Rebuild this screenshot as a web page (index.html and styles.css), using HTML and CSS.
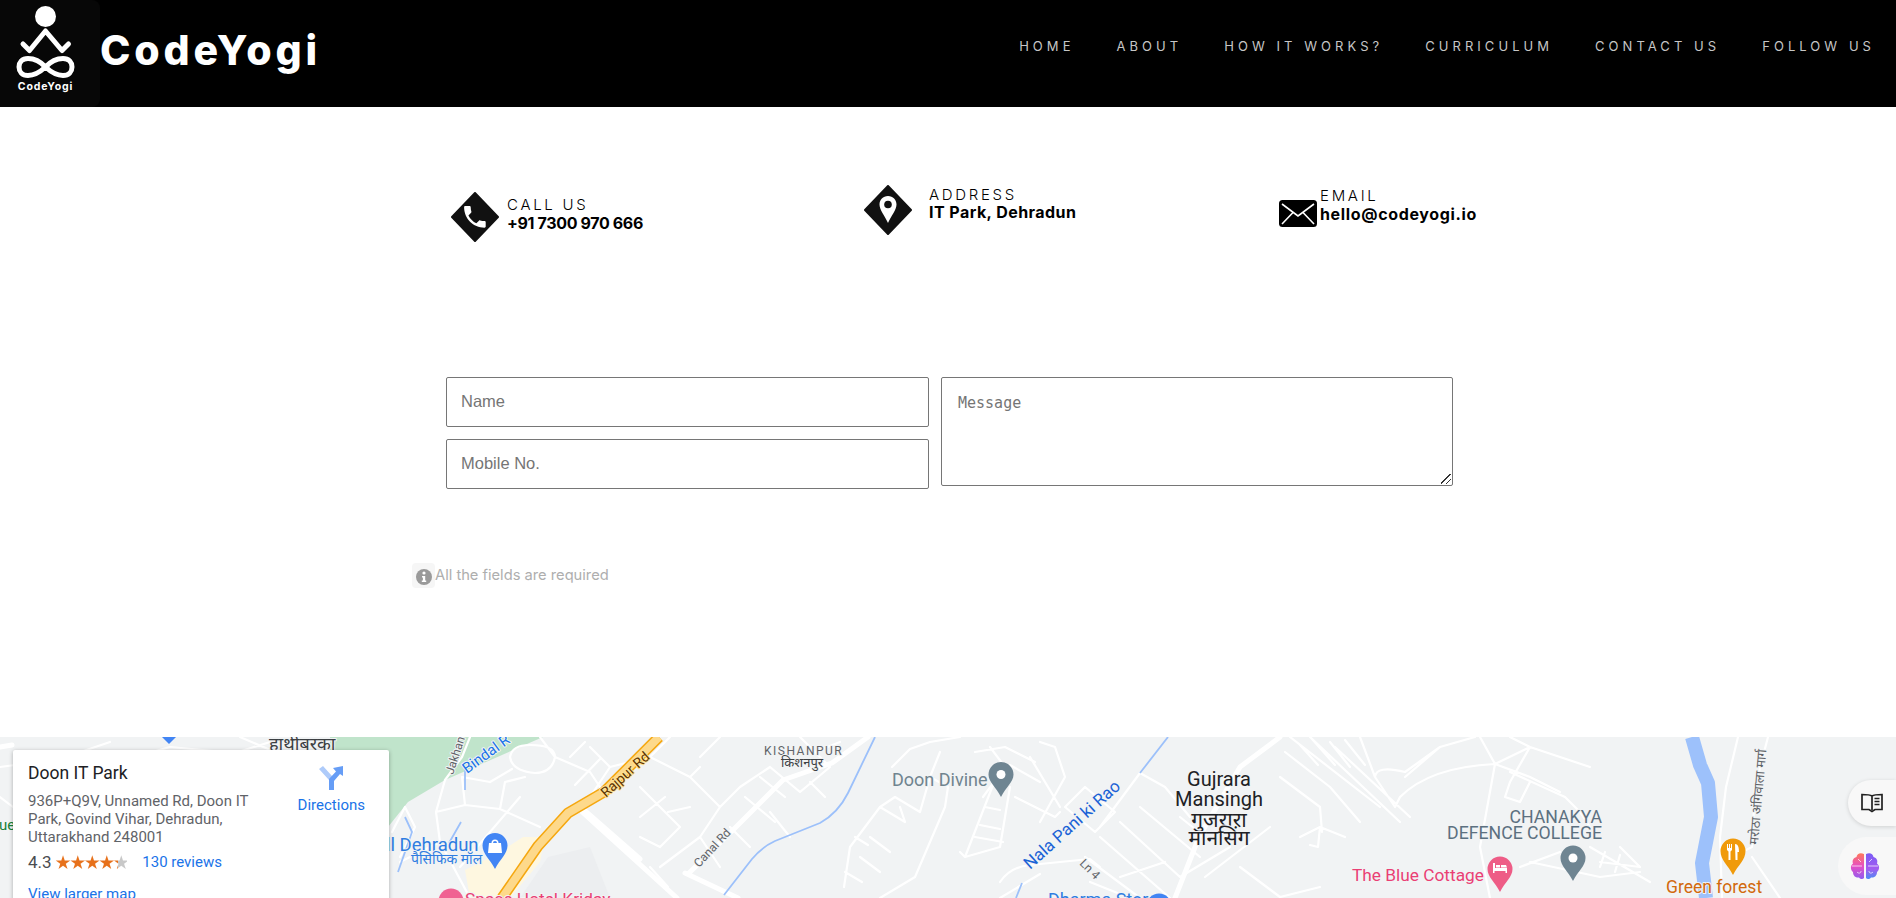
FILE: index.html
```html
<!DOCTYPE html>
<html lang="en">
<head>
<meta charset="utf-8">
<title>CodeYogi - Contact</title>
<link rel="stylesheet" href="styles.css">
</head>
<body>
<header class="topbar">
  <a class="brand" href="#">
    <span class="logo-box">
      <svg class="logo-svg" viewBox="0 0 100 106">
        <circle cx="45.500" cy="16.500" r="10.500" fill="#fff"/>
        <path class="logo-line" d="M23 44 L29.500 50.500 L45.500 31 L62 50.500 L68.500 44"/>
        <path class="logo-line" d="M45.500 67 C39 60 33 58.500 28 58.500 C22 58.500 19 62.500 19 67 C19 71.500 22 75.500 28 75.500 C33 75.500 39 73 45.500 67 C52 60 57 58.500 63 58.500 C69 58.500 72 62.500 72 67 C72 71.500 69 75.500 63 75.500 C57 75.500 52 73 45.500 67 Z"/>
        <text x="45.500" y="90" class="logo-text">CodeYogi</text>
      </svg>
    </span>
    <span class="wordmark">CodeYogi</span>
  </a>
  <nav class="nav">
    <a href="#">HOME</a>
    <a href="#">ABOUT</a>
    <a href="#">HOW IT WORKS?</a>
    <a href="#">CURRICULUM</a>
    <a href="#">CONTACT US</a>
    <a href="#">FOLLOW US</a>
  </nav>
</header>

<main class="contact">
  <section class="info-row">
    <div class="info info-call">
      <svg class="diamond" viewBox="0 0 48 50">
        <polygon points="24,1 47,25 24,49 1,25" fill="#111" stroke="#111" stroke-width="2" stroke-linejoin="round"/>
        <path transform="translate(9.500 10.500) scale(1.2)" fill="#fff" d="M6.620 10.790c1.440 2.830 3.760 5.140 6.590 6.590l2.200-2.200c.270-.270.670-.360 1.020-.240 1.120.370 2.330.570 3.570.570.550 0 1 .450 1 1V20c0 .550-.450 1-1 1-9.390 0-17-7.610-17-17 0-.550.450-1 1-1h3.500c.550 0 1 .450 1 1 0 1.250.200 2.450.570 3.570.110.350.030.740-.250 1.020l-2.200 2.200z"/>
      </svg>
      <div class="info-text">
        <span class="info-label">CALL US</span>
        <span class="info-value value-call">+91 7300 970 666</span>
      </div>
    </div>
    <div class="info info-address">
      <svg class="diamond" viewBox="0 0 48 50">
        <polygon points="24,1 47,25 24,49 1,25" fill="#111" stroke="#111" stroke-width="2" stroke-linejoin="round"/>
        <path fill="#fff" d="M24 11 C19 11 15.500 15 15.500 19.500 C15.500 25 21 31 24 38 C27 31 32.500 25 32.500 19.500 C32.500 15 29 11 24 11 Z"/>
        <circle cx="24" cy="19.500" r="3.800" fill="#111"/>
      </svg>
      <div class="info-text text-address">
        <span class="info-label">ADDRESS</span>
        <span class="info-value value-address">IT Park, Dehradun</span>
      </div>
    </div>
    <div class="info info-email">
      <svg class="envelope" viewBox="0 0 38 27">
        <rect width="38" height="27" rx="3.500" fill="#000"/>
        <path d="M3 4 L19 16 L35 4 M3 24 L14 12.500 M35 24 L24 12.500" stroke="#fff" stroke-width="1.600" fill="none"/>
      </svg>
      <div class="info-text">
        <span class="info-label">EMAIL</span>
        <span class="info-value value-email">hello@codeyogi.io</span>
      </div>
    </div>
  </section>

  <form class="form">
    <div class="form-left">
      <input class="field" type="text" placeholder="Name">
      <input class="field" type="text" placeholder="Mobile No.">
    </div>
    <textarea class="message" placeholder="Message"></textarea>
  </form>

  <p class="note">
    <span class="note-icon">
      <svg viewBox="0 0 16 16" class="note-svg"><circle cx="8" cy="8" r="8" fill="#9a9a9a"/><circle cx="8" cy="4" r="1.600" fill="#fff"/><path d="M6 7 H9.200 V11.500 H10.200 V13 H5.800 V11.500 H6.900 V8.400 H6 Z" fill="#fff"/></svg>
    </span>
    <span>All the fields are required</span>
  </p>
</main>

<section class="map">
  <svg class="map-svg" viewBox="0 0 1896 161">
    <polygon class="park" points="330,0 543,0 445,43 408,65 380,100 330,100"/>
    <polygon class="mall" points="465,133 495,118 523,100 545,100 540,125 510,161 470,161"/>
    <polygon class="block" points="520,161 548,120 590,110 610,161"/>
    <path class="minor" d="M0 30 L60 22 L110 5 M120 24 L170 10 L235 16 L270 5 M240 0 L268 12 M0 60 L13 70
      M445 43 L436 75 L440 105 L470 161 M445 43 L462 20 L470 0 M436 75 L465 68 L500 72 L540 90 M465 68 L462 40 L490 45 M490 45 L512 32 M500 72 L505 45 L525 40 M510 20 Q512 8 530 8 Q555 8 555 20 Q552 36 535 36 Q512 34 510 20 M555 20 L590 35 L600 50 M540 0 L555 20
      M392 95 L405 70 L415 90 L400 120 M440 105 L400 125 M460 130 L520 60 M570 20 L585 5 M575 48 L600 22
      M590 60 L610 30 L650 20 L670 0 M610 30 L590 10 M650 20 L690 40 L700 30 M640 50 L680 90 L660 110 M640 80 L665 60 M690 40 L720 70 L700 100 L720 130 M700 100 L660 130 M660 110 L640 100 M700 20 L720 0 M720 70 L740 50 L770 30 M745 60 L775 85 M770 30 L800 55 L830 30 L800 0 M750 110 L730 90 M770 75 L790 100 M785 60 L760 40 M810 45 L825 60 M815 15 L840 5 M668 75 L690 70 M650 130 L668 150
      M892 30 L910 12 L930 5 L960 0 M844 150 L850 110 L880 70 L895 60 L920 75 M880 70 L905 85 M860 120 L880 135 M870 100 L890 115 M905 85 L900 70 M915 140 L945 70 L948 50 L930 40 L920 75 M930 40 L940 15 M845 135 L862 145 M855 100 L868 108 M915 140 L880 161
      M960 115 L965 120 L1000 30 M965 120 L1000 110 L1010 50 M975 15 L1005 10 L1035 25 M983 60 L1005 30 L990 10 M1010 28 L1040 45 M1030 20 L1060 70 M1040 5 L1055 10 L1065 40 L1040 85 M1015 60 L1055 80 L1060 75 M975 100 L1003 105 M985 70 L1000 73 M980 88 L1000 92 M1000 145 Q1010 130 1030 128 L1090 122 L1100 130 M1040 137 L1000 161 M1085 120 L1140 161 M1100 90 L1140 36 L1165 50 L1190 80 M1065 70 L1085 50 L1115 75 L1095 95 L1065 70 M1100 100 L1170 161 M1120 85 L1180 140 L1230 110 M1140 70 L1200 120 M1180 80 L1205 100 M1205 140 L1270 90 M1240 130 L1280 160 M1090 145 L1130 161 M1120 140 L1165 125
      M1285 15 L1330 50 L1360 85 M1290 0 L1380 70 M1310 0 L1400 85 M1335 10 L1410 80 M1300 8 L1318 28 M1312 2 L1335 28 M1330 5 L1350 30 M1345 3 L1365 28 M1360 0 L1375 40 L1395 70 M1375 40 Q1376 28 1405 35 L1440 10 L1475 0 M1395 70 L1400 60 Q1430 30 1495 27 L1530 40 L1560 55 M1440 10 L1405 40 M1280 40 L1320 70 L1322 95 M1480 0 L1495 27 L1480 110 L1490 161 M1495 27 L1530 10 L1590 30 M1510 0 L1530 10 L1510 45 L1505 60 L1520 65 L1530 45 M1510 35 L1565 60 L1580 75 L1590 90 M1300 100 L1320 90 L1345 100 M1320 90 L1318 110 L1310 108 M1280 160 L1320 150 M1530 125 L1600 140 L1640 135 M1520 130 L1560 115 M1600 125 L1640 130 L1620 110 M1590 110 L1650 145 M1605 115 L1600 130 M1620 118 L1615 135
      M1738 0 L1726 50 L1720 100 L1722 161 M1768 0 L1755 50 L1752 110 L1738 117 M1752 120 L1780 161"/>
    <path class="major" d="M580 73 L677 161 M584 73 L640 122 M0 10 L12 8 M685 136 L738 161 M689 136 L730 96 L783 43 L832 26 L868 0 M1280 0 L1240 30 L1199 100 L1175 161"/>
    <path class="road-edge" d="M502 161 L538 109 L568 76 L604 55 L659 0"/>
    <path class="road-fill" d="M502 161 L538 109 L568 76 L604 55 L659 0"/>
    <path class="stream" d="M875 0 L848 56 Q838 76 820 86 L775 104 Q762 110 752 122 L724 158 M1168 0 L1140 36 M465 30 L465 53 M461 85 L449 106 M405 80 L412 95 L398 135 M1022 146 L1016 161"/>
    <path class="river" d="M1692 0 L1700 28 L1708 46 L1711 80 L1702 126 L1706 161"/>

    <text class="lbl-hi" x="269" y="13">हाथीबरका</text>
    <text class="lbl-green" x="-1" y="93">ue</text>
    <text class="lbl-road" transform="translate(453 38) rotate(-72)">Jakhan St</text>
    <text class="lbl-water" transform="translate(467 37) rotate(-36)">Bindal R</text>
    <text class="lbl-major" transform="translate(606 61) rotate(-42)">Rajpur Rd</text>
    <text class="lbl-poi lbl-mall" x="386" y="114">ll Dehradun</text>
    <text class="lbl-poi-hi" x="411" y="127">पैसिफिक मॉल</text>
    <text class="lbl-hotel" x="465" y="168">Space Hotel Kriday</text>
    <text class="lbl-area" x="764" y="18">KISHANPUR</text>
    <text class="lbl-area-hi" x="781" y="30">किशनपुर</text>
    <text class="lbl-gray-poi" x="892" y="49">Doon Divine</text>
    <text class="lbl-road" transform="translate(699 131) rotate(-47)">Canal Rd</text>
    <text class="lbl-water-lg" transform="translate(1030 133) rotate(-42)">Nala Pani ki Rao</text>
    <text class="lbl-road" transform="translate(1079 127) rotate(45)">Ln 4</text>
    <text class="lbl-town" x="1219" y="49">Gujrara</text>
    <text class="lbl-town" x="1219" y="69">Mansingh</text>
    <text class="lbl-town lbl-town-hi" x="1219" y="90">गुजरारा</text>
    <text class="lbl-town lbl-town-hi" x="1219" y="108">मानसिंग</text>
    <text class="lbl-poi" x="1048" y="169">Dharma Store</text>
    <text class="lbl-college" x="1602" y="86">CHANAKYA</text>
    <text class="lbl-college" x="1602" y="102">DEFENCE COLLEGE</text>
    <text class="lbl-hotel" x="1352" y="144">The Blue Cottage</text>
    <text class="lbl-food" x="1666" y="156">Green forest</text>
    <text class="lbl-road lbl-road-hi" transform="translate(1758 108) rotate(-85)">मरोठा अंगिवाला मार्ग</text>

    <g fill="#4285f4">
      <path d="M162 0 H176 L169 7 Z"/>
      <path d="M495 132 C490 122 482.500 117 482.500 108.500 A12.500 12.500 0 0 1 507.500 108.500 C507.500 117 500 122 495 132 Z"/>
      <circle cx="1159" cy="169" r="12.500"/>
    </g>
    <path fill="#fff" d="M489 106 H501 L502 116 H488 Z M491.500 106 A3.500 3.500 0 0 1 498.500 106 H497 A2 2 0 0 0 493 106 Z"/>
    <circle cx="451" cy="164" r="12.500" fill="#f06292"/>
    <g fill="#6f8592">
      <path d="M1001 60 C996 50 988.500 45 988.500 37.500 A12.500 12.500 0 0 1 1013.500 37.500 C1013.500 45 1006 50 1001 60 Z"/>
      <path d="M1573 144 C1568 134 1560.500 129 1560.500 121 A12.500 12.500 0 0 1 1585.500 121 C1585.500 129 1578 134 1573 144 Z"/>
    </g>
    <circle cx="1001" cy="37.500" r="4.500" fill="#fff"/>
    <circle cx="1573" cy="121" r="4.500" fill="#fff"/>
    <path fill="#ee5c86" d="M1500 155 C1495 145 1487.500 140 1487.500 132 A12.500 12.500 0 0 1 1512.500 132 C1512.500 140 1505 145 1500 155 Z"/>
    <path fill="#fff" d="M1493 126 H1495 V131 H1507 V136 H1505.500 V134 H1494.500 V136 H1493 Z M1496 128 H1500 V130.500 H1496 Z M1501 128 H1506 L1507 130.500 H1501 Z"/>
    <path fill="#f09a0a" d="M1733 138 C1728 128 1720.500 123 1720.500 114 A12.500 12.500 0 0 1 1745.500 114 C1745.500 123 1738 128 1733 138 Z"/>
    <path fill="#fff" d="M1727 107 H1728 V111 H1729 V107 H1730 V111 H1731 V107 H1732 V113 L1730.500 114.500 V123 H1728.500 V114.500 L1727 113 Z M1735 107 C1738 107 1739 110 1739 115 H1737.500 V123 H1735.500 Z"/>
  </svg>

  <article class="card">
    <div class="card-main">
      <h2 class="card-title">Doon IT Park</h2>
      <p class="card-address">936P+Q9V, Unnamed Rd, Doon IT Park, Govind Vihar, Dehradun, Uttarakhand 248001</p>
      <div class="card-rating">
        <span class="rating-num">4.3</span>
        <span class="stars">★★★★★</span>
        <a class="card-link reviews" href="#">130 reviews</a>
      </div>
      <a class="card-link larger" href="#">View larger map</a>
    </div>
    <a class="directions" href="#">
      <svg class="directions-svg" viewBox="0 0 24 24">
        <polygon points="0,3 4,0 13,10 15,15 15,24 10,24 10,14" fill="#aecbfa"/>
        <polygon points="10,24 10,13 17,5.500 14,2 24,0 24,10 21,8 15,15 15,24" fill="#669df6"/>
      </svg>
      <span>Directions</span>
    </a>
  </article>
</section>

<aside class="floaters">
  <button class="float-round" type="button" aria-label="Reader">
    <svg viewBox="0 0 24 24" class="book-svg">
      <path d="M12 5 C10 3.500 6 3.500 2 3.500 V18.500 H9 L12 20.500 L15 18.500 H22 V3.500 C18 3.500 14 3.500 12 5 Z M12 5 V19" fill="none" stroke="#222" stroke-width="1.700"/>
      <path d="M14.500 7.500 H19.500 M14.500 10.500 H19.500 M14.500 13.500 H19.500" stroke="#222" stroke-width="1.500"/>
    </svg>
  </button>
  <button class="float-pill" type="button" aria-label="Assistant">
    <svg viewBox="0 0 32 32" class="brain-svg">
      <defs>
        <linearGradient id="brainLeft" x1="0" y1="0" x2="0" y2="1"><stop offset="0" stop-color="#ff7a59"/><stop offset=".5" stop-color="#e64fc4"/><stop offset="1" stop-color="#8f5cf0"/></linearGradient>
        <linearGradient id="brainRight" x1="0" y1="0" x2="0" y2="1"><stop offset="0" stop-color="#7a5cf5"/><stop offset=".6" stop-color="#a45cf0"/><stop offset="1" stop-color="#4d8cf5"/></linearGradient>
      </defs>
      <path fill="url(#brainLeft)" d="M15 4 C11 2 8 4 7.500 7 C4 8 3 11 4 13.500 C1 16 1.500 20 4 22 C4 26 7 28 10 27.500 C11.500 29.500 14 29.500 15 28 Z"/>
      <path fill="url(#brainRight)" d="M17 4 C21 2 24 4 24.500 7 C28 8 29 11 28 13.500 C31 16 30.500 20 28 22 C28 26 25 28 22 27.500 C20.500 29.500 18 29.500 17 28 Z"/>
      <path d="M3 16 H13 M19 16 H29 M9 9 L12 12 M23 9 L20 12 M8 22 C10 24 12 23 12 21 M24 22 C22 24 20 23 20 21" stroke="#fff" stroke-opacity=".7" stroke-width="1" fill="none"/>
    </svg>
  </button>
</aside>
</body>
</html>
```
FILE: styles.css
```css
* { box-sizing: border-box; }
html, body { margin: 0; padding: 0; height: 898px; overflow: hidden; background: #fff; }
body { font-family: "Inter", "Liberation Sans", sans-serif; color: #000; position: relative; }
a { text-decoration: none; color: inherit; }

/* Header */
.topbar {
  height: 107px; background: #000; display: flex; justify-content: space-between;
  padding-right: 21px;
}
.brand { display: flex; align-items: flex-start; }
.logo-box { width: 100px; height: 107px; background: #070707; border-radius: 0 8px 8px 0; display: block; }
.logo-svg { width: 100px; height: 106px; display: block; }
.logo-line { fill: none; stroke: #fff; stroke-width: 5; stroke-linecap: round; stroke-linejoin: round; }
.logo-text { fill: #fff; font: 700 10.500px "Inter", sans-serif; text-anchor: middle; letter-spacing: .9px; }
.wordmark { color: #fff; font-size: 41px; font-weight: 800; letter-spacing: 3.800px; line-height: 48px; margin-top: 26px; }
.nav { display: flex; gap: 42px; padding-top: 37px; }
.nav a { color: #c6c6c6; font-size: 13px; font-weight: 400; letter-spacing: 4.050px; line-height: 18px; }

/* Contact */
.contact { height: 630px; }
.info-row { display: grid; grid-template-columns: 413px 415px auto; padding-left: 451px; height: 270px; align-items: start; }
.info { display: flex; align-items: center; }
.info-call { margin-top: 85px; gap: 8px; }
.info-address { margin-top: 78px; gap: 17px; }
.info-email { margin-top: 80px; gap: 3px; align-items: flex-end; }
.diamond { width: 48px; height: 50px; flex: none; }
.envelope { width: 38px; height: 27px; flex: none; margin-bottom: -4px; }
.info-text { display: flex; flex-direction: column; margin-top: -6px; }
.info-email .info-text { margin-top: 0; }
.text-address { margin-top: -13px; }
.info-label { font-size: 15px; font-weight: 300; letter-spacing: 2.700px; line-height: 18px; }
.info-value { font-size: 16px; font-weight: 700; line-height: 18px; }
.value-call { letter-spacing: -.35px; }
.value-address { letter-spacing: .45px; line-height: 17px; }
.value-email { letter-spacing: .65px; }

.form { display: grid; grid-template-columns: 483px 512px; column-gap: 12px; padding-left: 446px; align-items: start; }
.form-left { display: flex; flex-direction: column; gap: 12px; }
.field, .message { border: 1px solid #767676; border-radius: 2px; background-color: #fff; margin: 0; outline: none; display: block; width: 100%; }
.field { height: 50px; padding: 0 14px 1px; font: 16.500px "Liberation Sans", sans-serif; }
.message {
  height: 109px; padding: 16px 16px; font: 15px "DejaVu Sans Mono", monospace; resize: none;
  background-image: linear-gradient(135deg, transparent 45%, #333 45% 53%, transparent 53% 72%, #333 72% 80%, transparent 80%);
  background-size: 10px 10px; background-position: right 1px bottom 1px; background-repeat: no-repeat;
}
.field::placeholder, .message::placeholder { color: #757575; opacity: 1; }

.note { display: flex; align-items: center; margin: 74px 0 0 412px; color: #aeaeae; font-size: 14.700px; font-weight: 400; line-height: 25px; }
.note-icon { width: 23px; height: 25px; background: #f6f6f6; display: flex; align-items: center; justify-content: center; border-radius: 4px; }
.note-svg { width: 16px; height: 16px; margin-top: 3px; }

/* Map */
.map { height: 161px; position: relative; overflow: hidden; background: #f1f3f4; font-family: "Roboto", sans-serif; }
.map-svg { position: absolute; inset: 0; width: 1896px; height: 161px; display: block; }
.park { fill: #c0e4cb; }
.mall { fill: #fef7e0; }
.block { fill: #eceef0; }
.minor { fill: none; stroke: #fff; stroke-width: 2.200; stroke-linecap: round; stroke-linejoin: round; }
.major { fill: none; stroke: #fff; stroke-width: 5; stroke-linecap: round; stroke-linejoin: round; }
.road-edge { fill: none; stroke: #f5a70f; stroke-width: 11; stroke-linejoin: round; }
.road-fill { fill: none; stroke: #fdd98b; stroke-width: 8; stroke-linejoin: round; }
.stream { fill: none; stroke: #9cc0fa; stroke-width: 1.800; stroke-linejoin: round; }
.river { fill: none; stroke: #9dc1fb; stroke-width: 14; stroke-linejoin: round; }
.map-svg text { font-family: "Roboto", "Noto Sans", sans-serif; paint-order: stroke; stroke: #f1f3f4; stroke-width: 2px; stroke-linejoin: round; }
.map-svg .lbl-hi { font-size: 18px; fill: #3c4043; }
.map-svg .lbl-green { font-size: 15px; fill: #188038; }
.map-svg .lbl-road { font-size: 12px; fill: #5f6368; }
.map-svg .lbl-road-hi { font-size: 13px; }
.map-svg .lbl-water { font-size: 15px; fill: #1a73e8; }
.map-svg .lbl-water-lg { font-size: 17px; fill: #1a62d6; }
.map-svg .lbl-major { font-size: 14px; fill: #5d3200; stroke: #fde293; }
.map-svg .lbl-poi { font-size: 18px; fill: #2f7de1; }
.map-svg .lbl-mall { font-size: 18.500px; }
.map-svg .lbl-poi-hi { font-size: 14px; fill: #2f7de1; }
.map-svg .lbl-hotel { font-size: 17.300px; fill: #ea3f74; }
.map-svg .lbl-area { font-size: 12px; fill: #5f6368; letter-spacing: 1.500px; }
.map-svg .lbl-area-hi { font-size: 13px; fill: #3c4043; }
.map-svg .lbl-gray-poi { font-size: 18px; fill: #70848f; }
.map-svg .lbl-town { font-size: 20px; fill: #202124; text-anchor: middle; }
.map-svg .lbl-town-hi { font-size: 21px; }
.map-svg .lbl-college { font-size: 17.700px; fill: #5c7080; text-anchor: end; }
.map-svg .lbl-food { font-size: 17.500px; fill: #d2690c; }

.card {
  position: absolute; left: 13px; top: 13px; width: 376px; height: 170px; background: #fff; border-radius: 2px;
  box-shadow: 0 1px 4px rgba(0,0,0,.3); display: flex; justify-content: space-between; padding: 13px 24px 0 15px;
}
.card-main { width: 240px; }
.card-title { margin: 0; font-size: 17.500px; font-weight: 400; line-height: 20px; color: #202124; }
.card-address { margin: 9px 0 0; font-size: 15px; line-height: 18px; color: #5f6368; }
.card-rating { display: flex; align-items: center; margin-top: 4px; line-height: 24px; }
.rating-num { font-size: 17px; color: #4a4d50; }
.stars {
  font: 19px "DejaVu Sans", sans-serif; margin-left: 3px; letter-spacing: -2.500px;
  background: linear-gradient(90deg, #e7711b 88%, #c8c8c8 88%); -webkit-background-clip: text; background-clip: text; color: transparent;
}
.card-link { color: #1a73e8; font-size: 15px; }
.reviews { margin-left: 15px; }
.larger { display: block; margin-top: 11px; }
.directions { display: flex; flex-direction: column; align-items: center; gap: 6px; color: #1a73e8; font-size: 15px; padding-top: 3px; }
.directions-svg { width: 24px; height: 24px; display: block; }

/* Floating buttons */
.floaters { position: absolute; right: 0; top: 780px; display: flex; flex-direction: column; align-items: flex-end; gap: 11px; }
.float-round, .float-pill { border: 0; padding: 0; display: flex; align-items: center; justify-content: center; background: #f8f8f8; }
.float-round { width: 48px; height: 46px; border-radius: 23px 0 0 23px; box-shadow: 0 1px 4px rgba(0,0,0,.14); }
.float-pill { width: 58px; height: 58px; border-radius: 29px 0 0 29px; padding-right: 5px; }
.book-svg { width: 24px; height: 24px; }
.brain-svg { width: 32px; height: 32px; }
```
